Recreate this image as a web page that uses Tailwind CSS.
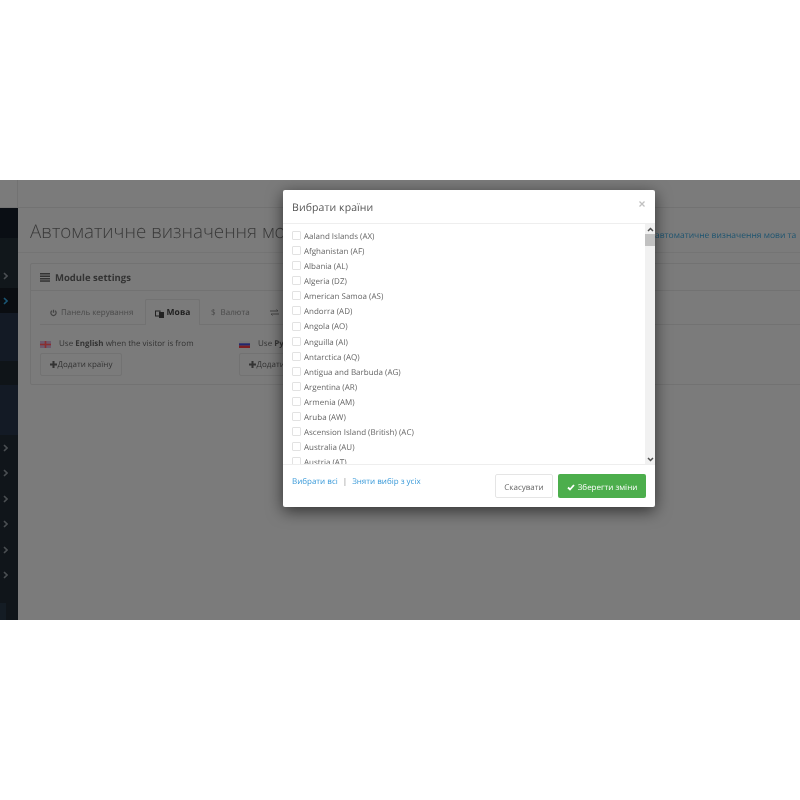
<!DOCTYPE html>
<html><head><meta charset="utf-8">
<script src="https://cdn.jsdelivr.net/npm/@tailwindcss/browser@4"></script>
</head>
<body class="bg-white m-0 font-['Open_Sans',sans-serif] [text-rendering:geometricPrecision]">
<div class="h-[180px]"></div>
<div class="relative h-[440px] w-[800px] overflow-hidden bg-[#7b7b7b]">
  <!-- page -->
  <div class="flex h-full">
    <aside class="w-[18px] shrink-0 flex flex-col bg-[#10151a]">
      <div class="h-[28px] bg-[#7b7b7b] border-b border-r border-[#727272] shrink-0"></div>
      <div class="h-[30px] bg-[#0a0e14] shrink-0"></div>
      <div class="h-[25px] bg-[#11171b] shrink-0"></div>
      <div class="h-[25px] bg-[#11171b] flex items-center justify-end pr-[10px] shrink-0"><svg width="5" height="8" viewBox="0 0 5 8" fill="none" stroke="#4a4e52" stroke-width="1.6"><path d="M1 1l3 3-3 3"/></svg></div>
      <div class="h-[25px] bg-[#0a0d11] flex items-center justify-end pr-[10px] shrink-0"><svg width="5" height="8" viewBox="0 0 5 8" fill="none" stroke="#1a5573" stroke-width="1.6"><path d="M1 1l3 3-3 3"/></svg></div>
      <div class="h-[48px] bg-[#131a25] shrink-0"></div>
      <div class="h-[24px] bg-[#0f1418] shrink-0"></div>
      <div class="h-[50px] bg-[#131a25] shrink-0"></div>
      <div class="flex flex-col shrink-0">
        <div class="h-[25.5px] flex items-center justify-end pr-[10px]"><svg width="5" height="8" viewBox="0 0 5 8" fill="none" stroke="#4a4e52" stroke-width="1.6"><path d="M1 1l3 3-3 3"/></svg></div>
        <div class="h-[25.5px] flex items-center justify-end pr-[10px]"><svg width="5" height="8" viewBox="0 0 5 8" fill="none" stroke="#4a4e52" stroke-width="1.6"><path d="M1 1l3 3-3 3"/></svg></div>
        <div class="h-[25.5px] flex items-center justify-end pr-[10px]"><svg width="5" height="8" viewBox="0 0 5 8" fill="none" stroke="#4a4e52" stroke-width="1.6"><path d="M1 1l3 3-3 3"/></svg></div>
        <div class="h-[25.5px] flex items-center justify-end pr-[10px]"><svg width="5" height="8" viewBox="0 0 5 8" fill="none" stroke="#4a4e52" stroke-width="1.6"><path d="M1 1l3 3-3 3"/></svg></div>
        <div class="h-[25.5px] flex items-center justify-end pr-[10px]"><svg width="5" height="8" viewBox="0 0 5 8" fill="none" stroke="#4a4e52" stroke-width="1.6"><path d="M1 1l3 3-3 3"/></svg></div>
        <div class="h-[25.5px] flex items-center justify-end pr-[10px]"><svg width="5" height="8" viewBox="0 0 5 8" fill="none" stroke="#4a4e52" stroke-width="1.6"><path d="M1 1l3 3-3 3"/></svg></div>
      </div>
      <div class="mt-[15px] h-[17px] w-[6px] bg-[#141c24]"></div>
    </aside>
    <main class="flex-1 min-w-0 overflow-hidden blur-[0.35px]">
      <div class="h-[28px] border-b border-[#727272] bg-[#7b7b7b]"></div>
      <div class="h-[45px] pl-[12px] pt-[3px] flex items-center border-b border-[#747474] whitespace-nowrap relative">
        <span class="text-[18.8px] font-light text-[#3a3a3a] leading-none">Автоматичне визначення мови та валюти</span>
        <span class="absolute left-[603px] top-[22px] text-[8.5px] leading-[12px] text-[#1d5470]">Модуль автоматичне визначення мови та</span>
      </div>
      <section class="ml-[12px] mt-[10px] w-[800px] h-[122px] border border-[#727272] rounded-[2px]">
        <div class="h-[27px] flex items-center pl-[9px] gap-[5px] border-b border-[#727272] text-[9.5px] font-bold text-[#333] whitespace-nowrap">
          <svg width="10" height="9" viewBox="0 0 10 9" fill="#333"><rect y="0" width="10" height="1.5"/><rect y="2.5" width="10" height="1.5"/><rect y="5" width="10" height="1.5"/><rect y="7.3" width="10" height="1.5"/></svg>
          <span class="pt-[3px]">Module settings</span>
        </div>
        <div class="px-[9px]">
          <div class="flex h-[25px] mt-[9px] items-end border-b border-[#727272] text-[8px] text-[#4a4a4a] whitespace-nowrap">
            <div class="w-[105px] h-full pt-[2px] flex items-center pl-[10px] gap-[4px]">
              <svg width="7" height="8" viewBox="0 0 8 8" fill="none" stroke="#444" stroke-width="1.4"><path d="M2.2 1.5a3 3 0 1 0 3.6 0M4 .4v3.2"/></svg>
              <span>Панель керування</span>
            </div>
            <div class="w-[55px] h-[26px] pt-[2px] -mb-px bg-[#7b7b7b] border border-b-0 border-[#727272] rounded-t-[2px] flex items-center justify-center gap-[3px] font-bold text-[#222] text-[8.5px]">
              <svg width="9" height="8" viewBox="0 0 9 8" fill="#222"><rect x="0.5" y="1" width="4.5" height="5" fill="none" stroke="#222"/><rect x="4" y="2" width="5" height="6"/></svg>
              <span>Мова</span>
            </div>
            <div class="w-[70px] h-full pt-[2px] flex items-center pl-[11px] gap-[5px]"><span>$</span><span>Валюта</span></div>
            <div class="h-full flex items-center">
              <svg width="9" height="7" viewBox="0 0 9 7" fill="none" stroke="#444"><path d="M0 2h8M6.500.5L8 2M9 5H1M2.500 6.500L1 5"/></svg>
            </div>
          </div>
          <div class="flex mt-[12px] text-[8px] text-[#333] whitespace-nowrap">
            <div class="w-[199px]">
              <div class="flex items-center h-[14px]">
                <svg width="11" height="7" viewBox="0 0 11 7"><rect width="11" height="7" fill="#6d5a6e"/><path d="M0 3.500h11M5.500 0v7" stroke="#8a2e30" stroke-width="1.6"/></svg>
                <span class="ml-[8px]">Use <b>English</b> when the visitor is from</span>
              </div>
              <div class="mt-[2px] w-[82px] h-[23px] border border-[#727272] rounded-[2px] flex items-center justify-center gap-[1px]"><svg width="7" height="7" viewBox="0 0 7 7" fill="#333"><path d="M2.500 0h2v2.500H7v2H4.500V7h-2V4.500H0v-2h2.500z"/></svg><span>Додати країну</span></div>
            </div>
            <div>
              <div class="flex items-center h-[14px]">
                <svg width="11" height="7" viewBox="0 0 11 7"><rect width="11" height="2.400" fill="#777"/><rect y="2.300" width="11" height="2.400" fill="#23286e"/><rect y="4.600" width="11" height="2.400" fill="#7c1f22"/></svg>
                <span class="ml-[8px]">Use <b>Русский</b></span>
              </div>
              <div class="mt-[2px] w-[82px] h-[23px] border border-[#727272] rounded-[2px] flex items-center justify-center gap-[1px]"><svg width="7" height="7" viewBox="0 0 7 7" fill="#333"><path d="M2.500 0h2v2.500H7v2H4.500V7h-2V4.500H0v-2h2.500z"/></svg><span>Додати країну</span></div>
            </div>
          </div>
        </div>
      </section>
    </main>
  </div>
  <!-- modal -->
  <div class="absolute left-[283px] top-[10px] w-[372px] h-[317px] bg-white rounded-[2px] shadow-[0_4px_16px_rgba(0,0,0,0.6)] flex flex-col overflow-hidden">
    <div class="h-[34px] shrink-0 border-b border-[#eeeeee] flex items-center justify-between pl-[9px] pr-[10px]">
      <span class="text-[10.5px] pt-[4px] text-[#555] blur-[0.25px] tracking-[0.1px]">Вибрати країни</span>
      <svg class="-mt-[6px]" width="6" height="6" viewBox="0 0 6 6" stroke="#c0c0c0" stroke-width="1.3"><path d="M.5.5l5 5M5.500.5l-5 5"/></svg>
    </div>
    <div class="h-[240px] shrink-0 flex overflow-hidden">
      <ul class="flex-1 pl-[9px] pt-[5px] text-[8px] leading-[15.08px] text-[#666] blur-[0.25px]">
        <li class="flex items-center h-[15.08px]"><span class="w-[7px] h-[7px] border border-[#e2e2e2] rounded-[1px] mr-[3px] -mt-[2px] box-content"></span>Aaland Islands (AX)</li>
        <li class="flex items-center h-[15.08px]"><span class="w-[7px] h-[7px] border border-[#e2e2e2] rounded-[1px] mr-[3px] -mt-[2px] box-content"></span>Afghanistan (AF)</li>
        <li class="flex items-center h-[15.08px]"><span class="w-[7px] h-[7px] border border-[#e2e2e2] rounded-[1px] mr-[3px] -mt-[2px] box-content"></span>Albania (AL)</li>
        <li class="flex items-center h-[15.08px]"><span class="w-[7px] h-[7px] border border-[#e2e2e2] rounded-[1px] mr-[3px] -mt-[2px] box-content"></span>Algeria (DZ)</li>
        <li class="flex items-center h-[15.08px]"><span class="w-[7px] h-[7px] border border-[#e2e2e2] rounded-[1px] mr-[3px] -mt-[2px] box-content"></span>American Samoa (AS)</li>
        <li class="flex items-center h-[15.08px]"><span class="w-[7px] h-[7px] border border-[#e2e2e2] rounded-[1px] mr-[3px] -mt-[2px] box-content"></span>Andorra (AD)</li>
        <li class="flex items-center h-[15.08px]"><span class="w-[7px] h-[7px] border border-[#e2e2e2] rounded-[1px] mr-[3px] -mt-[2px] box-content"></span>Angola (AO)</li>
        <li class="flex items-center h-[15.08px]"><span class="w-[7px] h-[7px] border border-[#e2e2e2] rounded-[1px] mr-[3px] -mt-[2px] box-content"></span>Anguilla (AI)</li>
        <li class="flex items-center h-[15.08px]"><span class="w-[7px] h-[7px] border border-[#e2e2e2] rounded-[1px] mr-[3px] -mt-[2px] box-content"></span>Antarctica (AQ)</li>
        <li class="flex items-center h-[15.08px]"><span class="w-[7px] h-[7px] border border-[#e2e2e2] rounded-[1px] mr-[3px] -mt-[2px] box-content"></span>Antigua and Barbuda (AG)</li>
        <li class="flex items-center h-[15.08px]"><span class="w-[7px] h-[7px] border border-[#e2e2e2] rounded-[1px] mr-[3px] -mt-[2px] box-content"></span>Argentina (AR)</li>
        <li class="flex items-center h-[15.08px]"><span class="w-[7px] h-[7px] border border-[#e2e2e2] rounded-[1px] mr-[3px] -mt-[2px] box-content"></span>Armenia (AM)</li>
        <li class="flex items-center h-[15.08px]"><span class="w-[7px] h-[7px] border border-[#e2e2e2] rounded-[1px] mr-[3px] -mt-[2px] box-content"></span>Aruba (AW)</li>
        <li class="flex items-center h-[15.08px]"><span class="w-[7px] h-[7px] border border-[#e2e2e2] rounded-[1px] mr-[3px] -mt-[2px] box-content"></span>Ascension Island (British) (AC)</li>
        <li class="flex items-center h-[15.08px]"><span class="w-[7px] h-[7px] border border-[#e2e2e2] rounded-[1px] mr-[3px] -mt-[2px] box-content"></span>Australia (AU)</li>
        <li class="flex items-center h-[15.08px]"><span class="w-[7px] h-[7px] border border-[#e2e2e2] rounded-[1px] mr-[3px] -mt-[2px] box-content"></span>Austria (AT)</li>
      </ul>
      <div class="w-[10px] shrink-0 bg-[#f1f1f1] flex flex-col items-center justify-between relative">
        <svg class="mt-[3px]" width="7" height="5" viewBox="0 0 7 5" fill="none" stroke="#505050" stroke-width="1.500"><path d="M1 4l2.500-2.500L6 4"/></svg>
        <div class="absolute top-[10px] left-0 w-[10px] h-[12px] bg-[#c1c1c1]"></div>
        <svg class="mb-[2px]" width="7" height="5" viewBox="0 0 7 5" fill="none" stroke="#505050" stroke-width="1.500"><path d="M1 1l2.500 2.500L6 1"/></svg>
      </div>
    </div>
    <div class="flex-1 border-t border-[#eeeeee] flex justify-between pl-[9px] pr-[9px] pt-[9px]">
      <div class="mt-[1px] text-[8px] text-[#3a9ad9] h-[14px] flex items-center gap-[5px] blur-[0.25px]">
        <span>Вибрати всі</span><span class="text-[#888]">|</span><span>Зняти вибір з усіх</span>
      </div>
      <div class="flex gap-[5px] text-[8px] blur-[0.25px]">
        <div class="w-[58px] h-[24px] pt-[3px] border border-[#e5e5e5] rounded-[2px] flex items-center justify-center text-[#666]">Скасувати</div>
        <div class="w-[88px] h-[24px] pt-[3px] bg-[#4cae4c] rounded-[2px] flex items-center justify-center gap-[3px] text-white">
          <svg width="8" height="7" viewBox="0 0 8 7" fill="none" stroke="#fff" stroke-width="1.800"><path d="M1 3.500L3 5.500 7 1"/></svg>
          <span>Зберегти зміни</span>
        </div>
      </div>
    </div>
  </div>
</div>
</body></html>
